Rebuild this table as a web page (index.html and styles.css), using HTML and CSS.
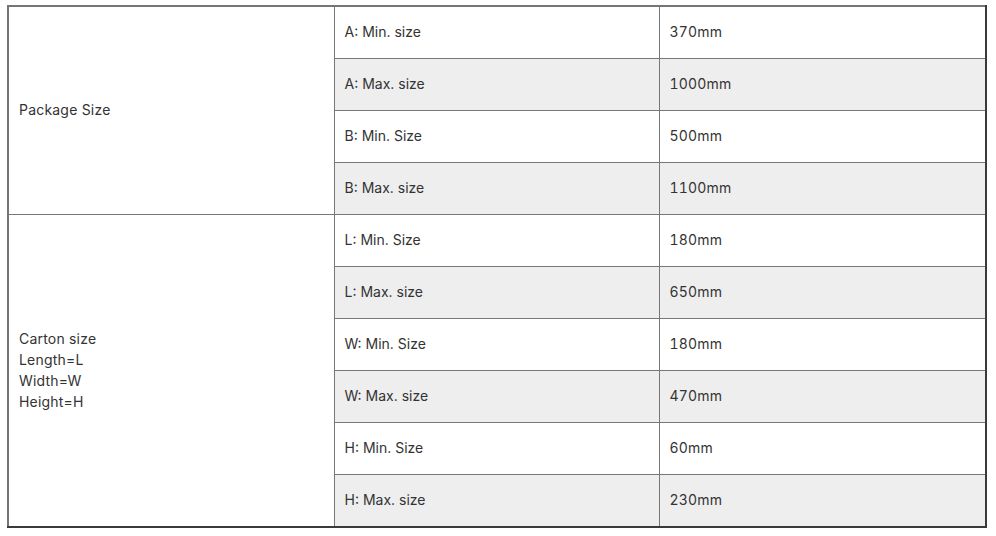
FILE: index.html
```html
<!DOCTYPE html>
<html>
<head>
<meta charset="utf-8">
<link rel="stylesheet" href="styles.css">
</head>
<body>
<table class="spec">
  <colgroup><col class="c1"><col class="c2"><col class="c3"></colgroup>
  <tbody>
    <tr><td class="group" rowspan="4">Package Size</td><td>A: Min. size</td><td class="num">370mm</td></tr>
    <tr class="alt"><td>A: Max. size</td><td class="num">1000mm</td></tr>
    <tr><td>B: Min. Size</td><td class="num">500mm</td></tr>
    <tr class="alt"><td>B: Max. size</td><td class="num">1100mm</td></tr>
    <tr><td class="group" rowspan="6">Carton size<br>Length=L<br>Width=W<br>Height=H</td><td>L: Min. Size</td><td class="num">180mm</td></tr>
    <tr class="alt"><td>L: Max. size</td><td class="num">650mm</td></tr>
    <tr><td>W: Min. Size</td><td class="num">180mm</td></tr>
    <tr class="alt"><td>W: Max. size</td><td class="num">470mm</td></tr>
    <tr><td>H: Min. Size</td><td class="num">60mm</td></tr>
    <tr class="alt"><td>H: Max. size</td><td class="num">230mm</td></tr>
  </tbody>
</table>
</body>
</html>
```
FILE: styles.css
```css
html, body {
  margin: 0;
  background: #fff;
}
body {
  padding: 5px 9px 0 7px;
  font-family: Inter, "Open Sans", sans-serif;
  font-size: 14px;
  color: #333;
}
.spec {
  width: 980px;
  border-collapse: collapse;
  border-top: 2px solid #757575;
  border-left: 2px solid #757575;
  border-right: 2px solid #3a3a3a;
  border-bottom: 2px solid #3a3a3a;
  table-layout: fixed;
}
.spec .c1 { width: 326px; }
.spec .c2 { width: 325px; }
.spec td {
  border: 1px solid #777;
  padding: 0 10px 2px;
  height: 49px;
  line-height: 21px;
  vertical-align: middle;
  background: #fff;
}
.spec td.num {
  font-variant-numeric: tabular-nums;
  letter-spacing: 0.2px;
}
.spec tr.alt td {
  background: #eee;
}
.spec td.group {
  background: #fff;
  letter-spacing: 0.2px;
}
```
